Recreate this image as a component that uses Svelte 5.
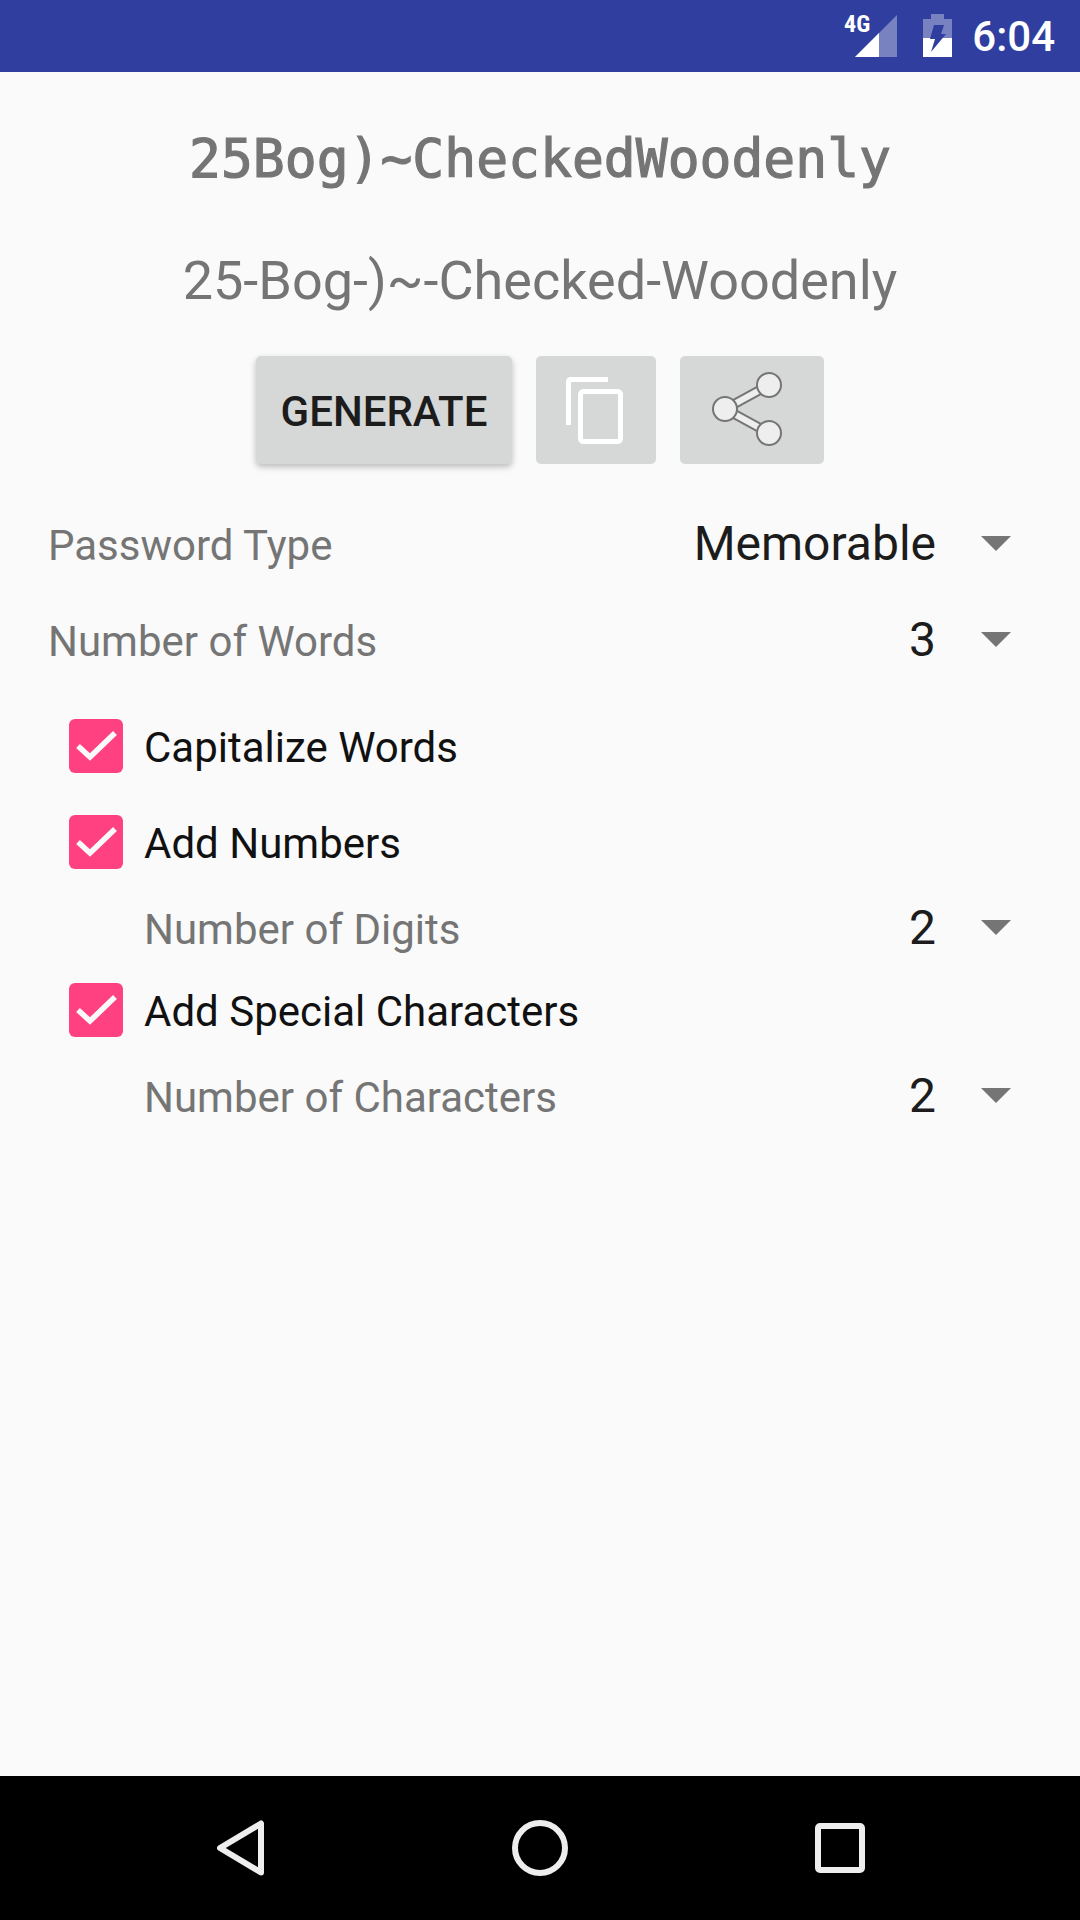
<script>
  const checks = [
    { label: 'Capitalize Words' },
    { label: 'Add Numbers', sub: 'Number of Digits', value: '2' },
    { label: 'Add Special Characters', sub: 'Number of Characters', value: '2' },
  ];
</script>

<main>
  <header class="status">
    <span class="net">4G</span>
    <svg class="signal" width="44" height="44" viewBox="0 0 44 44">
      <path d="M42 1V43H0Z" fill="#fff" opacity="0.35" />
      <path d="M24 19V43H0Z" fill="#fff" />
    </svg>
    <svg class="battery" width="30" height="44" viewBox="0 0 30 44">
      <path d="M0 5H8V0H21V5H29V43H0Z" fill="#fff" opacity="0.35" />
      <path d="M0 24H29V43H0Z" fill="#fff" />
      <path d="M11 11H21L18 20H23L8 38L12 25H7Z" fill="#303f9f" />
    </svg>
    <span class="time">6:04</span>
  </header>

  <section class="content">
    <div class="mono">25Bog)~CheckedWoodenly</div>
    <div class="spaced">25-Bog-)~-Checked-Woodenly</div>

    <div class="actions">
      <button class="generate">GENERATE</button>
      <button class="copy" aria-label="Copy">
        <svg width="60" height="68" viewBox="0 0 60 68">
          <path d="M42 3.5H5Q2.5 3.5 2.5 6V49" fill="none" stroke="#fff" stroke-width="5" />
          <rect x="14.5" y="15.5" width="40" height="50" rx="3" fill="none" stroke="#fff" stroke-width="5" />
        </svg>
      </button>
      <button class="share" aria-label="Share">
        <svg width="80" height="76" viewBox="0 0 80 76">
          <path d="M57 13L13 37L57 61" fill="none" stroke="#757575" stroke-width="10" />
          <path d="M57 13L13 37L57 61" fill="none" stroke="#eee" stroke-width="6" />
          <circle cx="57" cy="13" r="12" fill="#eee" stroke="#757575" stroke-width="2" />
          <circle cx="13" cy="37" r="12" fill="#eee" stroke="#757575" stroke-width="2" />
          <circle cx="57" cy="61" r="12" fill="#eee" stroke="#757575" stroke-width="2" />
        </svg>
      </button>
    </div>

    <div class="row">
      <span class="label">Password Type</span>
      <span class="value big">Memorable</span>
      <span class="arrow"></span>
    </div>
    <div class="row">
      <span class="label">Number of Words</span>
      <span class="value">3</span>
      <span class="arrow"></span>
    </div>

    <div class="options">
      {#each checks as item}
        <div class="check">
          <svg width="54" height="54" viewBox="0 0 54 54">
            <rect width="54" height="54" rx="6" fill="#ff4081" />
            <path d="M9 27L21 38L46 14" fill="none" stroke="#fafafa" stroke-width="5.5" />
          </svg>
          <span>{item.label}</span>
        </div>
        {#if item.sub}
          <div class="row sub">
            <span class="label">{item.sub}</span>
            <span class="value">{item.value}</span>
            <span class="arrow"></span>
          </div>
        {/if}
      {/each}
    </div>
  </section>

  <footer class="nav">
    <svg width="47" height="56" viewBox="0 0 47 56">
      <path d="M44 3.5V52.5L3 28Z" fill="none" stroke="#eee" stroke-width="6" stroke-linejoin="round" />
    </svg>
    <svg width="56" height="56" viewBox="0 0 56 56">
      <circle cx="28" cy="28" r="25" fill="none" stroke="#eee" stroke-width="6" />
    </svg>
    <svg width="50" height="50" viewBox="0 0 50 50">
      <rect x="3" y="3" width="44" height="44" rx="2" fill="none" stroke="#eee" stroke-width="6" />
    </svg>
  </footer>
</main>

<style>
  :global(body) {
    margin: 0;
  }

  main {
    width: 1080px;
    height: 1920px;
    display: flex;
    flex-direction: column;
    background-color: #fafafa;
    font-family: Roboto, sans-serif;
    overflow: hidden;
  }

  .status {
    height: 72px;
    background-color: #303f9f;
    display: flex;
    align-items: center;
    justify-content: flex-end;
    padding-right: 25px;
    color: #fff;
    position: relative;
  }

  .net {
    position: absolute;
    left: 844px;
    top: 10px;
    font-size: 24px;
    font-weight: 700;
    font-stretch: condensed;
  }

  .signal {
    margin-right: 24px;
    margin-top: -1px;
  }

  .battery {
    margin-right: 19px;
    margin-top: -1px;
  }

  .time {
    font-size: 42px;
    font-weight: 500;
  }

  .content {
    flex: 1;
    display: flex;
    flex-direction: column;
  }

  .mono {
    margin-top: 52px;
    text-align: center;
    font-family: "DejaVu Sans Mono", monospace;
    font-size: 53px;
    line-height: 70px;
    color: #757575;
    -webkit-text-stroke: 1.2px #757575;
  }

  .spaced {
    margin-top: 52px;
    text-align: center;
    font-size: 54px;
    line-height: 70px;
    color: #757575;
  }

  .actions {
    margin-top: 40px;
    display: flex;
    justify-content: center;
    gap: 24px;
  }

  button {
    height: 108px;
    border: none;
    border-radius: 5px;
    background-color: #d6d7d7;
    padding: 0;
    display: flex;
    align-items: center;
    justify-content: center;
  }

  .generate {
    width: 256px;
    padding-top: 2px;
    font-family: Roboto, sans-serif;
    font-size: 42px;
    font-weight: 500;
    color: #1c1c1c;
    box-shadow: 0 3px 6px rgba(0, 0, 0, 0.25);
  }

  .copy {
    width: 120px;
  }

  .share {
    width: 144px;
  }

  .row {
    height: 96px;
    display: flex;
    align-items: center;
    padding: 0 69px 0 48px;
  }

  .actions + .row {
    margin-top: 33px;
  }

  .label {
    flex: 1;
    font-size: 42px;
    color: #757575;
  }

  .value {
    font-size: 48px;
    color: #1c1c1c;
    margin-top: -4px;
  }

  .arrow {
    width: 0;
    height: 0;
    margin-left: 45px;
    margin-top: -4px;
    border-left: 15px solid transparent;
    border-right: 15px solid transparent;
    border-top: 15px solid #757575;
  }

  .options {
    margin-top: 10px;
  }

  .check {
    height: 96px;
    display: flex;
    align-items: center;
    padding-left: 69px;
    gap: 21px;
    font-size: 42px;
    color: #111;
  }

  .check svg {
    margin-top: -2px;
  }

  .sub {
    height: 76px;
    padding-left: 144px;
  }

  .sub + .check {
    margin-top: -4px;
  }

  .nav {
    height: 144px;
    background-color: #000;
    display: flex;
    align-items: center;
    padding-left: 217px;
    padding-right: 215px;
    justify-content: space-between;
  }
</style>
